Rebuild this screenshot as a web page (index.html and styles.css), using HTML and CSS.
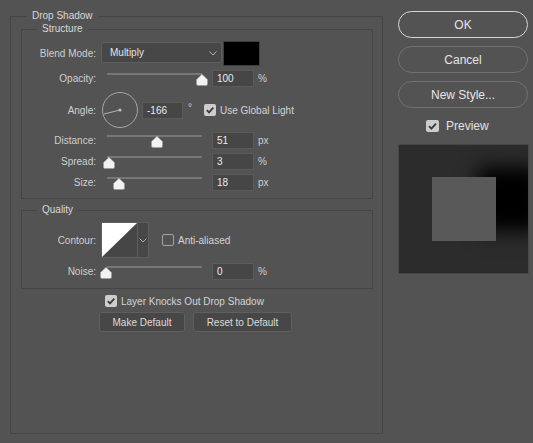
FILE: index.html
```html
<!DOCTYPE html>
<html>
<head>
<meta charset="utf-8">
<link rel="stylesheet" href="styles.css">
</head>
<body>
<div class="dialog">
  <fieldset class="group outer">
    <legend>Drop Shadow</legend>
    <fieldset class="group inner structure">
      <legend>Structure</legend>
      <div class="row r-blend">
        <span class="label">Blend Mode:</span>
        <div class="select"><span>Multiply</span>
          <svg class="chev" width="8" height="5" viewBox="0 0 8 5"><path d="M0.5 0.5 L4 4 L7.5 0.5" fill="none" stroke="#b0b0b0" stroke-width="1"/></svg>
        </div>
        <div class="swatch"></div>
      </div>
      <div class="row r-slider r-opacity">
        <span class="label">Opacity:</span>
        <div class="slider"><div class="track"></div>
          <svg class="thumb" style="left:95px" width="12" height="12" viewBox="0 0 12 12"><path d="M6 0.3 L11.5 5.6 V10 Q11.5 11.5 10 11.5 H2 Q0.5 11.5 0.5 10 V5.6 Z" fill="#f2f2f2" stroke="#9a9a9a" stroke-width="0.6"/></svg>
        </div>
        <div class="input">100</div><span class="unit">%</span>
      </div>
      <div class="row r-angle">
        <span class="label">Angle:</span>
        <svg class="dial" width="38" height="38" viewBox="0 0 38 38">
          <circle cx="19" cy="19" r="17.5" fill="none" stroke="#a6a6a6" stroke-width="1"/>
          <line x1="19" y1="19" x2="3" y2="23" stroke="#b4b4b4" stroke-width="1"/>
          <circle cx="19" cy="19" r="1.6" fill="#bdbdbd"/>
        </svg>
        <div class="input angle-input">-166</div><span class="deg">°</span>
        <span class="check on"><svg width="12" height="12" viewBox="0 0 12 12"><path d="M2.8 6.2 L5 8.4 L9.3 3.6" fill="none" stroke="#3b3b3b" stroke-width="1.8"/></svg></span>
        <span class="ctext">Use Global Light</span>
      </div>
      <div class="row r-slider r-distance">
        <span class="label">Distance:</span>
        <div class="slider"><div class="track"></div>
          <svg class="thumb" style="left:50px" width="12" height="12" viewBox="0 0 12 12"><path d="M6 0.3 L11.5 5.6 V10 Q11.5 11.5 10 11.5 H2 Q0.5 11.5 0.5 10 V5.6 Z" fill="#f2f2f2" stroke="#9a9a9a" stroke-width="0.6"/></svg>
        </div>
        <div class="input">51</div><span class="unit">px</span>
      </div>
      <div class="row r-slider r-spread">
        <span class="label">Spread:</span>
        <div class="slider"><div class="track"></div>
          <svg class="thumb" style="left:2px" width="12" height="12" viewBox="0 0 12 12"><path d="M6 0.3 L11.5 5.6 V10 Q11.5 11.5 10 11.5 H2 Q0.5 11.5 0.5 10 V5.6 Z" fill="#f2f2f2" stroke="#9a9a9a" stroke-width="0.6"/></svg>
        </div>
        <div class="input">3</div><span class="unit">%</span>
      </div>
      <div class="row r-slider r-size">
        <span class="label">Size:</span>
        <div class="slider"><div class="track"></div>
          <svg class="thumb" style="left:12px" width="12" height="12" viewBox="0 0 12 12"><path d="M6 0.3 L11.5 5.6 V10 Q11.5 11.5 10 11.5 H2 Q0.5 11.5 0.5 10 V5.6 Z" fill="#f2f2f2" stroke="#9a9a9a" stroke-width="0.6"/></svg>
        </div>
        <div class="input">18</div><span class="unit">px</span>
      </div>
    </fieldset>
    <fieldset class="group inner quality">
      <legend>Quality</legend>
      <div class="row r-contour">
        <span class="label">Contour:</span>
        <div class="contour">
          <svg class="curve" width="35" height="34" viewBox="0 0 35 34" shape-rendering="crispEdges">
            <rect width="35" height="34" fill="#464646"/>
            <polygon points="0,0 35,0 0,34" fill="#ffffff" shape-rendering="auto"/>
          </svg>
          <div class="cdrop"><svg width="8" height="5" viewBox="0 0 8 5"><path d="M0.5 0.5 L4 4 L7.5 0.5" fill="none" stroke="#a8a8a8" stroke-width="1"/></svg></div>
        </div>
        <span class="check off"></span>
        <span class="ctext">Anti-aliased</span>
      </div>
      <div class="row r-slider r-noise">
        <span class="label">Noise:</span>
        <div class="slider"><div class="track"></div>
          <svg class="thumb" style="left:-1px" width="12" height="12" viewBox="0 0 12 12"><path d="M6 0.3 L11.5 5.6 V10 Q11.5 11.5 10 11.5 H2 Q0.5 11.5 0.5 10 V5.6 Z" fill="#f2f2f2" stroke="#9a9a9a" stroke-width="0.6"/></svg>
        </div>
        <div class="input">0</div><span class="unit">%</span>
      </div>
    </fieldset>
    <div class="knock">
      <span class="check on"><svg width="12" height="12" viewBox="0 0 12 12"><path d="M2.8 6.2 L5 8.4 L9.3 3.6" fill="none" stroke="#3b3b3b" stroke-width="1.8"/></svg></span>
      <span class="ctext">Layer Knocks Out Drop Shadow</span>
    </div>
    <div class="defaults">
      <button class="sbtn make">Make Default</button>
      <button class="sbtn reset">Reset to Default</button>
    </div>
  </fieldset>
  <div class="side">
    <button class="pill ok">OK</button>
    <button class="pill">Cancel</button>
    <button class="pill">New Style...</button>
    <div class="preview-row">
      <span class="check on big"><svg width="13" height="12" viewBox="0 0 13 12"><path d="M3 6.2 L5.4 8.6 L10 3.6" fill="none" stroke="#3b3b3b" stroke-width="1.9"/></svg></span>
      <span class="ptext">Preview</span>
    </div>
    <div class="preview"><div class="square"></div></div>
  </div>
</div>
</body>
</html>
```

FILE: styles.css
```css
html, body {
  margin: 0;
  padding: 0;
  background: #535353;
  width: 533px;
  height: 443px;
  overflow: hidden;
  font-family: "Liberation Sans", Arial, sans-serif;
  font-size: 10px;
  color: #cfcfcf;
}

.dialog {
  display: flex;
  align-items: flex-start;
}

.group {
  border: 1px solid #454545;
  padding: 0;
  margin: 0;
  min-inline-size: 0;
  box-sizing: border-box;
}

.group > legend {
  padding: 0 5px;
  line-height: 12px;
  font-size: 10px;
  color: #d8d8d8;
}

.outer {
  margin: 10px 0 0 10px;
  width: 373px;
  height: 424px;
}
.outer > legend { margin-left: 16px; }

.inner {
  margin: 1px 9px 0 10px;
}
.inner > legend { margin-left: 15px; }

.structure { padding-bottom: 7px; }
.quality { margin-top: 5px; padding-bottom: 8px; }

.row {
  display: flex;
  align-items: center;
}

.label {
  width: 74px;
  text-align: right;
  flex: none;
  margin-right: 5px;
}

.r-blend { margin-top: 6px; height: 24px; }
.r-opacity { margin-top: 5px; }
.r-angle { margin-top: 4px; }
.r-distance { margin-top: 3px; }
.r-spread, .r-size { margin-top: 4px; }
.r-contour { margin-top: 6px; }
.r-noise { margin-top: 5px; }

.select {
  width: 121px;
  height: 21px;
  box-sizing: border-box;
  background: #474747;
  border: 1px solid #5e5e5e;
  border-radius: 3px;
  display: flex;
  align-items: center;
  justify-content: space-between;
  padding: 0 4px 0 8px;
  color: #e2e2e2;
  margin-top: -1px;
}
.chev { margin-top: 1px; }

.swatch {
  width: 37px;
  height: 25px;
  box-sizing: border-box;
  background: #000;
  border: 1px solid #3e3e3e;
  margin-left: 1px;
}

.slider {
  position: relative;
  width: 107px;
  height: 17px;
  margin-right: 4px;
  flex: none;
}
.track {
  margin: 3px 0 0 6px;
  width: 95px;
  height: 2px;
  background: #777777;
}
.thumb {
  position: absolute;
  top: 4px;
}

.input {
  width: 42px;
  height: 17px;
  box-sizing: border-box;
  background: #464646;
  border: 1px solid #5b5b5b;
  padding-left: 4px;
  line-height: 15px;
  color: #ececec;
  flex: none;
}
.unit { margin-left: 4px; }

.dial { margin-left: 0; flex: none; }
.angle-input { margin-left: 3px; width: 41px; }
.deg { margin-left: 5px; margin-top: -6px; font-size: 10px; }

.check {
  width: 12px;
  height: 12px;
  box-sizing: border-box;
  border-radius: 2px;
  flex: none;
  display: flex;
}
.check.on { background: #cdcdcd; }
.check.off { border: 1px solid #a6a6a6; }
.r-angle .check { margin-left: 12px; }
.ctext { margin-left: 4px; color: #d4d4d4; }

.contour {
  display: flex;
  width: 48px;
  height: 36px;
  box-sizing: border-box;
  border: 1px solid #5e5e5e;
  background: #474747;
  flex: none;
}
.curve { display: block; }
.cdrop {
  flex: 1;
  border-left: 1px solid #5e5e5e;
  display: flex;
  align-items: center;
  justify-content: center;
}
.r-contour .check { margin-left: 13px; }

.knock {
  display: flex;
  align-items: center;
  margin: 6px 0 0 94px;
}

.defaults {
  display: flex;
  gap: 8px;
  margin: 5px 0 0 88px;
}
.sbtn {
  height: 20px;
  box-sizing: border-box;
  background: #474747;
  border: 1px solid #5f5f5f;
  border-radius: 3px;
  font-family: "Liberation Sans", Arial, sans-serif;
  font-size: 10px;
  color: #dcdcdc;
  padding: 0;
}
.make { width: 86px; }
.reset { width: 99px; }

.side {
  width: 130px;
  margin-left: 15px;
  padding-top: 11px;
  display: flex;
  flex-direction: column;
}
.pill {
  height: 27px;
  box-sizing: border-box;
  border-radius: 14px;
  background: #535353;
  border: 1px solid #727272;
  color: #e6e6e6;
  font-family: "Liberation Sans", Arial, sans-serif;
  font-size: 12px;
  margin-bottom: 8px;
  padding: 0;
}
.pill.ok { border-color: #d6d6d6; }

.preview-row {
  display: flex;
  align-items: center;
  margin: 4px 0 0 28px;
  height: 12px;
}
.check.big { width: 13px; }
.ptext { margin-left: 7px; font-size: 12px; color: #e0e0e0; }

.preview {
  margin-top: 12px;
  width: 131px;
  height: 130px;
  box-sizing: border-box;
  background: #2c2c2c;
  border: 1px solid #474747;
  overflow: hidden;
  display: flex;
  align-items: center;
  justify-content: center;
}
.square {
  width: 64px;
  height: 64px;
  background: #595959;
  box-shadow: 46px -10px 18px #000;
}
```
